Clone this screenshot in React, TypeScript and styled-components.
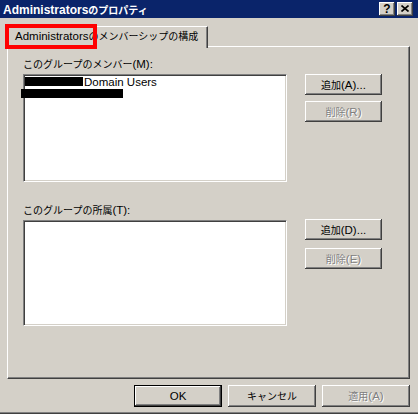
import React from "react";
import styled, { createGlobalStyle } from "styled-components";

const Global = createGlobalStyle`
  html, body { margin: 0; padding: 0; background: #D4D0C8; }
  body {
    font-family: "Liberation Sans", "Noto Sans CJK JP", sans-serif;
    font-size: 11.5px;
    color: #000;
  }
`;

const CJK = /([\u3000-\u30ff\u4e00-\u9fff\uff00-\uffef]+)/;

const Jp = styled.span<{ $size?: number }>`
  font-family: "Noto Sans CJK JP", sans-serif;
  font-size: ${(p) => p.$size ?? 10}px;
`;

function T({ children, size }: { children: string; size?: number }) {
  return (
    <>
      {children.split(CJK).map((part, i) =>
        CJK.test(part) ? (
          <Jp key={i} $size={size}>
            {part}
          </Jp>
        ) : (
          <React.Fragment key={i}>{part}</React.Fragment>
        )
      )}
    </>
  );
}

const Window = styled.div`
  position: relative;
  width: 418px;
  height: 414px;
  box-sizing: border-box;
  background: #d4d0c8;
  box-shadow: inset 0 -1px #404040, inset 0 -2px #808080;
  display: flex;
  flex-direction: column;
  overflow: hidden;
`;

const TitleBar = styled.div`
  height: 18px;
  background: #0a246a;
  display: flex;
  align-items: flex-start;
  padding: 0 5px 0 3px;
`;

const Title = styled.div`
  flex: 1;
  color: #fff;
  font-weight: bold;
  font-size: 12px;
  line-height: 17px;
  padding-top: 1px;
  white-space: nowrap;
`;

const CaptionButtons = styled.div`
  display: flex;
  gap: 2px;
  margin-top: 2px;
`;

const CaptionButton = styled.div`
  width: 16px;
  height: 14px;
  box-sizing: border-box;
  background: #d4d0c8;
  box-shadow: inset -1px -1px #404040, inset 1px 1px #fff,
    inset -2px -2px #808080, inset 2px 2px #d4d0c8;
  display: flex;
  align-items: center;
  justify-content: center;
  font-weight: bold;
  font-size: 12px;
  line-height: 12px;
  padding-bottom: 1px;
`;

const Body = styled.div`
  display: flex;
  flex-direction: column;
  padding: 8px 8px 0 7px;
`;

const TabRow = styled.div`
  position: relative;
  z-index: 1;
  display: flex;
  height: 20px;
`;

const Tab = styled.div`
  width: 201px;
  height: 22px;
  box-sizing: border-box;
  background: #d4d0c8;
  border-top: 1px solid #fff;
  border-left: 1px solid #fff;
  border-right: 1px solid #404040;
  box-shadow: inset -1px 0 #808080;
  padding: 3px 0 0 7px;
  line-height: 12px;
  white-space: nowrap;
`;

const Panel = styled.div`
  width: 403px;
  height: 333px;
  box-sizing: border-box;
  border-top: 1px solid #fff;
  border-left: 1px solid #fff;
  border-right: 1px solid #404040;
  border-bottom: 1px solid #404040;
  box-shadow: inset -1px -1px #808080;
  padding: 11px 0 0 15px;
  display: flex;
  flex-direction: column;
`;

const Group = styled.div<{ $mt: number }>`
  margin-top: ${(p) => p.$mt}px;
  display: flex;
  flex-direction: column;
`;

const GroupLabel = styled.div`
  line-height: 12px;
  height: 12px;
  margin-bottom: 4px;
  white-space: nowrap;
`;

const GroupRow = styled.div`
  display: flex;
  align-items: flex-start;
  gap: 18px;
`;

const ListBox = styled.div<{ $h: number }>`
  width: 264px;
  height: ${(p) => p.$h}px;
  box-sizing: border-box;
  background: #fff;
  border: 1px solid;
  border-color: #808080 #fff #fff #808080;
  box-shadow: inset 1px 1px #404040, inset -1px -1px #d4d0c8;
  padding: 1px 0 0 1px;
  display: flex;
  flex-direction: column;
`;

const ListRow = styled.div`
  display: flex;
  align-items: flex-start;
  height: 12px;
  line-height: 12px;
  white-space: nowrap;
`;

const Redact = styled.span<{ $w: number; $ml?: number }>`
  display: inline-block;
  width: ${(p) => p.$w}px;
  height: 9px;
  margin-top: 1px;
  margin-left: ${(p) => p.$ml ?? 0}px;
  margin-right: 1px;
  background: #000;
`;

const ButtonColumn = styled.div<{ $mt: number; $gap: number }>`
  display: flex;
  flex-direction: column;
  margin-top: ${(p) => p.$mt}px;
  gap: ${(p) => p.$gap}px;
`;

const Button = styled.div<{ $w: number; $h: number; $disabled?: boolean; $default?: boolean }>`
  width: ${(p) => p.$w}px;
  height: ${(p) => p.$h}px;
  box-sizing: border-box;
  background: #d4d0c8;
  display: flex;
  align-items: center;
  justify-content: center;
  line-height: 12px;
  white-space: nowrap;
  color: ${(p) => (p.$disabled ? "#808080" : "#000")};
  text-shadow: ${(p) => (p.$disabled ? "1px 1px 0 #fff" : "none")};
  border: ${(p) => (p.$default ? "1px solid #000" : "none")};
  box-shadow: inset -1px -1px #404040, inset 1px 1px #fff,
    inset -2px -2px #808080, inset 2px 2px #d4d0c8;
`;

const BottomBar = styled.div`
  display: flex;
  justify-content: flex-end;
  gap: 6px;
  margin-top: 6px;
`;

const Annotation = styled.div`
  position: absolute;
  left: 5px;
  top: 24px;
  width: 92px;
  height: 25px;
  box-sizing: border-box;
  border: 4px solid #ff0000;
  z-index: 2;
  pointer-events: none;
`;

export default function App() {
  return (
    <>
      <Global />
      <Window>
        <TitleBar>
          <Title>
            <T size={10}>Administratorsのプロパティ</T>
          </Title>
          <CaptionButtons>
            <CaptionButton>?</CaptionButton>
            <CaptionButton>
              <svg width="8" height="7" viewBox="0 0 8 7">
                <path d="M0.5 0.5 L7.5 6.5 M7.5 0.5 L0.5 6.5" stroke="#000" strokeWidth="1.6" />
              </svg>
            </CaptionButton>
          </CaptionButtons>
        </TitleBar>
        <Body>
          <TabRow>
            <Tab>
              <T>Administratorsのメンバーシップの構成</T>
            </Tab>
          </TabRow>
          <Panel>
            <Group $mt={0}>
              <GroupLabel>
                <T>このグループのメンバー(M):</T>
              </GroupLabel>
              <GroupRow>
                <ListBox $h={108}>
                  <ListRow>
                    <Redact $w={58} />
                    Domain Users
                  </ListRow>
                  <ListRow>
                    <Redact $w={102} $ml={-4} />
                  </ListRow>
                </ListBox>
                <ButtonColumn $mt={0} $gap={6}>
                  <Button $w={77} $h={21}>
                    <T>追加(A)...</T>
                  </Button>
                  <Button $w={77} $h={21} $disabled>
                    <T>削除(R)</T>
                  </Button>
                </ButtonColumn>
              </GroupRow>
            </Group>
            <Group $mt={22}>
              <GroupLabel>
                <T>このグループの所属(T):</T>
              </GroupLabel>
              <GroupRow>
                <ListBox $h={106} />
                <ButtonColumn $mt={-1} $gap={8}>
                  <Button $w={77} $h={21}>
                    <T>追加(D)...</T>
                  </Button>
                  <Button $w={77} $h={21} $disabled>
                    <T>削除(E)</T>
                  </Button>
                </ButtonColumn>
              </GroupRow>
            </Group>
          </Panel>
          <BottomBar>
            <Button $w={88} $h={22} $default>
              OK
            </Button>
            <Button $w={88} $h={22}>
              <T>キャンセル</T>
            </Button>
            <Button $w={88} $h={22} $disabled>
              <T>適用(A)</T>
            </Button>
          </BottomBar>
        </Body>
        <Annotation />
      </Window>
    </>
  );
}
